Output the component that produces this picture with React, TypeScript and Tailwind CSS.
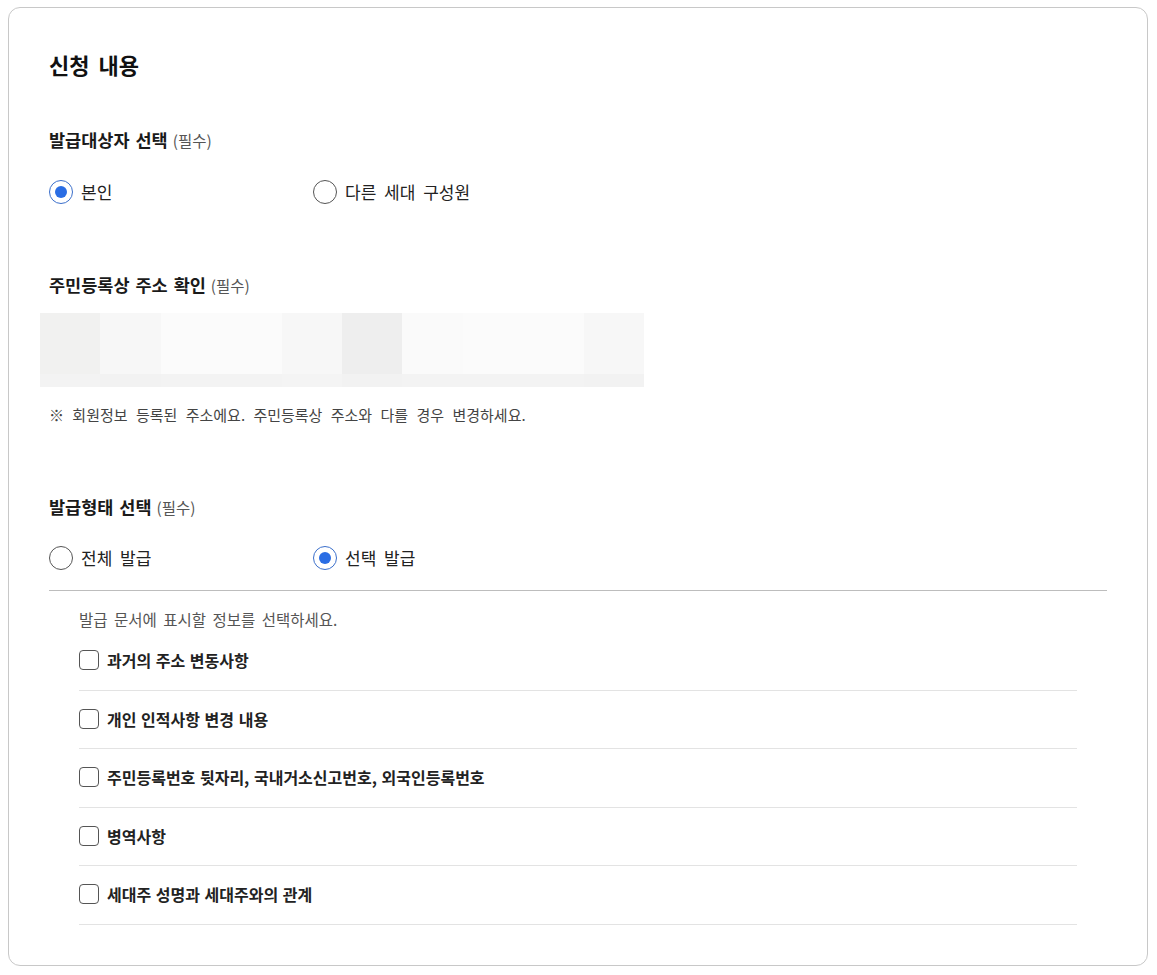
import { useState } from "react";

const mosaic = [
  ["#f1f1f0", "#f3f3f3"],
  ["#f7f7f7", "#f2f2f2"],
  ["#fbfbfb", "#f3f3f3"],
  ["#fbfbfb", "#f3f3f3"],
  ["#f7f7f7", "#f4f4f4"],
  ["#eeeeee", "#f2f2f2"],
  ["#fafafa", "#f3f3f3"],
  ["#fbfbfb", "#f3f3f3"],
  ["#fbfbfb", "#f3f3f3"],
  ["#f7f7f7", "#f2f2f2"],
];

const items = [
  "과거의 주소 변동사항",
  "개인 인적사항 변경 내용",
  "주민등록번호 뒷자리, 국내거소신고번호, 외국인등록번호",
  "병역사항",
  "세대주 성명과 세대주와의 관계",
];

function Radio({ checked, label, onClick }: { checked: boolean; label: string; onClick: () => void }) {
  return (
    <button type="button" onClick={onClick} className="flex w-[264px] items-center gap-2 text-left">
      {checked ? (
        <span className="flex h-6 w-6 items-center justify-center rounded-full border-[1.5px] border-[#3b6fcb] bg-white">
          <span className="h-3 w-3 rounded-full bg-[#2a6de4]" />
        </span>
      ) : (
        <span className="h-6 w-6 rounded-full border-[1.5px] border-[#555]" />
      )}
      <span className="text-[17px] leading-6 text-[#222] [word-spacing:4px]">{label}</span>
    </button>
  );
}

function Heading({ children }: { children: string }) {
  return (
    <h3 className="text-[17.5px] leading-6 font-bold text-[#1a1a1a] [word-spacing:2px]">
      {children}
      <span className="ml-[5px] text-[15.5px] font-normal text-[#555]">(필수)</span>
    </h3>
  );
}

export default function App() {
  const [target, setTarget] = useState("self");
  const [kind, setKind] = useState("select");
  const [checks, setChecks] = useState<boolean[]>(items.map(() => false));

  return (
    <div className="min-h-[975px] bg-white pt-[7px] pl-2 font-['Noto_Sans_CJK_KR',sans-serif]">
      <section className="w-[1140px] rounded-xl border border-[#c8c8c8] px-10 pt-10 pb-[40px]">
        <h2 className="text-[22px] leading-8 font-bold text-[#111] [word-spacing:4px]">신청 내용</h2>

        {/* 발급대상자 */}
        <div className="mt-12">
          <Heading>발급대상자 선택</Heading>
          <div className="mt-[28px] flex">
            <Radio checked={target === "self"} label="본인" onClick={() => setTarget("self")} />
            <Radio checked={target === "other"} label="다른 세대 구성원" onClick={() => setTarget("other")} />
          </div>
        </div>

        {/* 주소 */}
        <div className="mt-[69px]">
          <Heading>주민등록상 주소 확인</Heading>
          <div className="mt-4 -ml-[9px] grid w-[604px] grid-cols-10 grid-rows-[61px_13px]">
            {mosaic.map(([top], i) => (
              <div key={"t" + i} style={{ backgroundColor: top }} />
            ))}
            {mosaic.map(([, bottom], i) => (
              <div key={"b" + i} style={{ backgroundColor: bottom }} />
            ))}
          </div>
          <p className="mt-[17px] text-[15px] leading-[22px] text-[#444] [word-spacing:5px]">
            ※ 회원정보 등록된 주소에요. 주민등록상 주소와 다를 경우 변경하세요.
          </p>
        </div>

        {/* 발급형태 */}
        <div className="mt-[69px]">
          <Heading>발급형태 선택</Heading>
          <div className="mt-[27px] flex">
            <Radio checked={kind === "all"} label="전체 발급" onClick={() => setKind("all")} />
            <Radio checked={kind === "select"} label="선택 발급" onClick={() => setKind("select")} />
          </div>
          <div className="mt-5 border-t border-[#bdbdbd] px-[30px] pt-[17px]">
            <p className="text-[15.5px] leading-[22px] text-[#555] [word-spacing:3px]">
              발급 문서에 표시할 정보를 선택하세요.
            </p>
            <ul className="mt-[2px]">
              {items.map((item, i) => (
                <li key={item} className="border-b border-[#e3e3e3] pt-4 pb-[17.5px]">
                  <label className="flex cursor-pointer items-center gap-2">
                    <input
                      type="checkbox"
                      checked={checks[i]}
                      onChange={() => setChecks(checks.map((c, j) => (j === i ? !c : c)))}
                      className="peer sr-only"
                    />
                    <span className="h-5 w-5 rounded-[4px] border border-[#555] bg-white peer-checked:border-[#2a6de4] peer-checked:bg-[#2a6de4]" />
                    <span className="text-[16px] leading-6 font-bold text-[#222] [word-spacing:1px]">{item}</span>
                  </label>
                </li>
              ))}
            </ul>
          </div>
        </div>
      </section>
    </div>
  );
}
